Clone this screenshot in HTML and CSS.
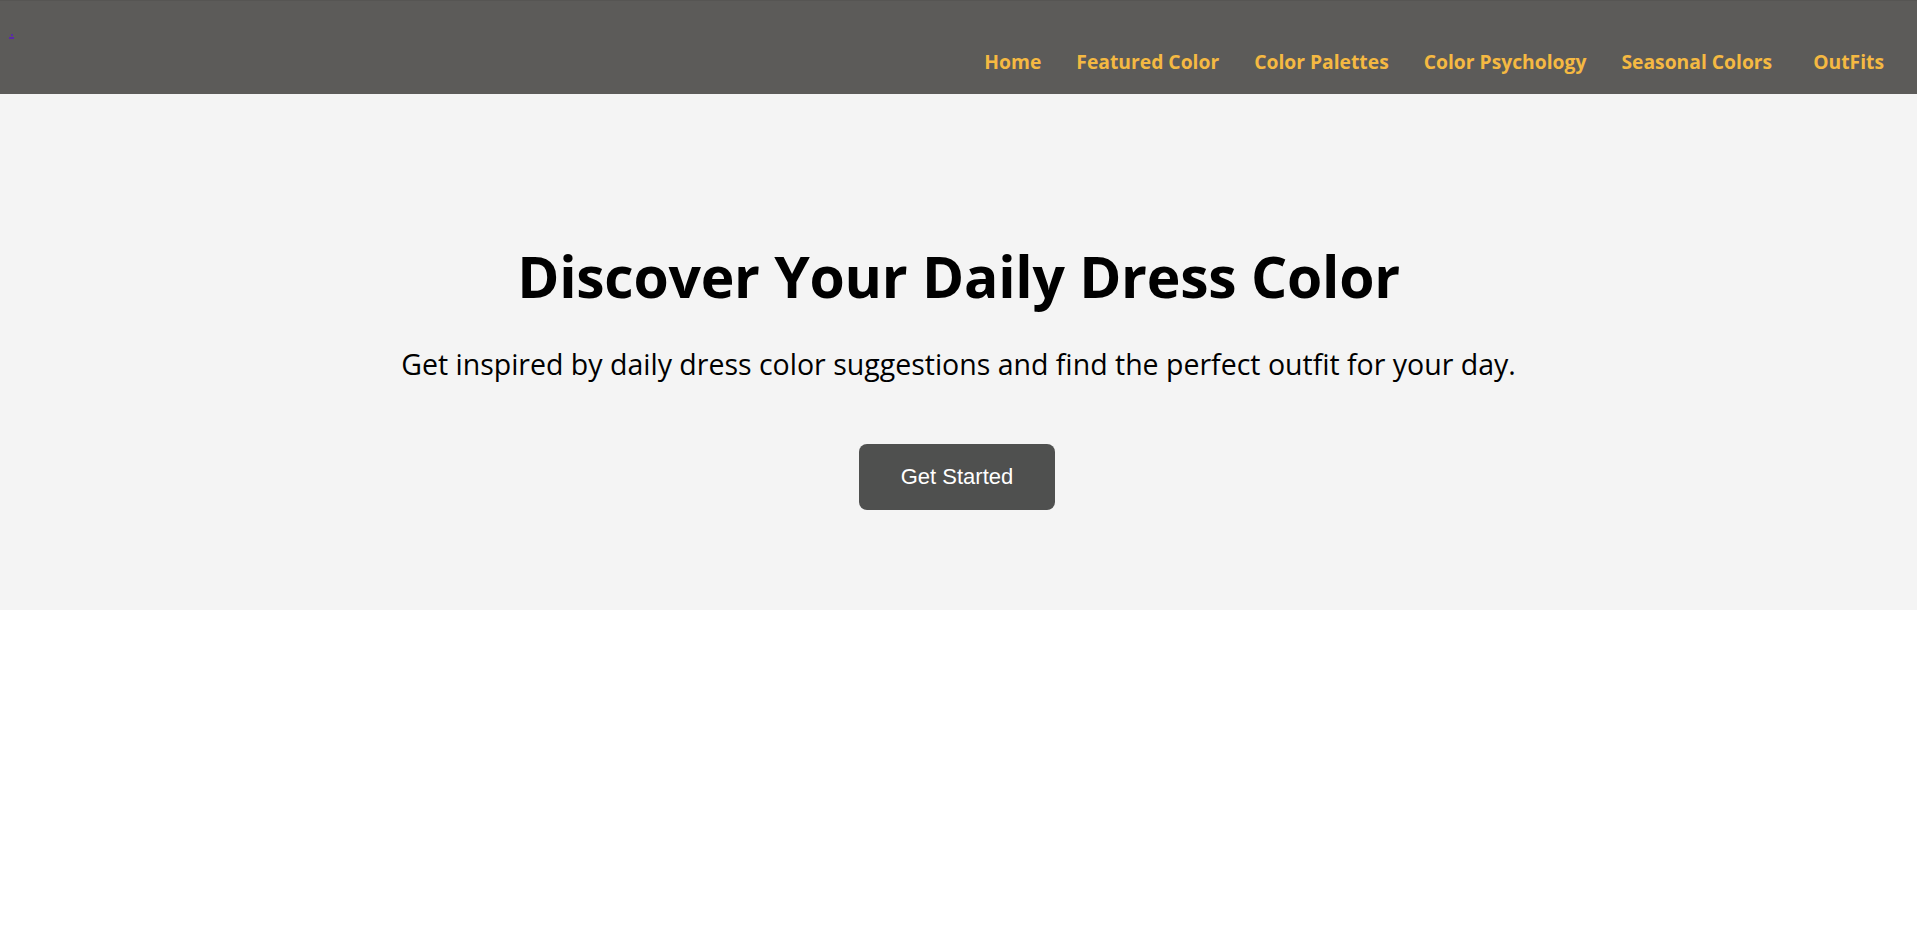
FILE: index.html
```html
<!DOCTYPE html>
<html lang="en">
<head>
<meta charset="utf-8">
<title>Daily Dress Color</title>
<link rel="stylesheet" href="styles.css">
</head>
<body>
<header class="site-header">
  <a class="logo" href="#" aria-label="logo">
    <svg width="6" height="6" viewBox="0 0 6 6"><rect x="2" y="0" width="2" height="2" fill="#5b2aa8"/><rect x="0" y="3" width="5" height="2" fill="#5b2aa8"/></svg>
  </a>
  <nav class="main-nav">
    <a href="#">Home</a>
    <a href="#">Featured Color</a>
    <a href="#">Color Palettes</a>
    <a href="#">Color Psychology</a>
    <a href="#">Seasonal Colors</a>
    <a class="last" href="#">OutFits</a>
  </nav>
</header>
<section class="hero">
  <h1 class="hero-title">Discover Your Daily Dress Color</h1>
  <p class="hero-text">Get inspired by daily dress color suggestions and find the perfect outfit for your day.</p>
  <button class="hero-btn" type="button">Get Started</button>
</section>
</body>
</html>
```
FILE: styles.css
```css
* { box-sizing: border-box; }
html, body { margin: 0; padding: 0; }
body {
  font-family: "Open Sans", "Noto Sans", sans-serif;
  background: #ffffff;
  color: #000;
}
.site-header {
  height: 94px;
  background: #5c5b59;
  border-top: 1px solid #565553;
  display: flex;
  justify-content: space-between;
  align-items: flex-start;
  padding: 0 33px 0 9px;
}
.logo {
  display: block;
  margin-top: 33px;
  line-height: 0;
}
.main-nav {
  display: flex;
  gap: 35px;
  margin-top: 47px;
}
.main-nav a {
  color: #f5b942;
  text-decoration: none;
  font-weight: 700;
  font-size: 19.3px;
  line-height: 28px;
}
.main-nav a.last {
  margin-left: 6px;
}
.hero {
  background: #f4f4f4;
  height: 516px;
  padding-top: 148px;
  text-align: center;
  display: flex;
  flex-direction: column;
  align-items: center;
}
.hero-title {
  margin: 0;
  font-size: 57px;
  line-height: 68px;
  font-weight: 700;
  letter-spacing: -0.25px;
}
.hero-text {
  margin: 36px 0 0;
  font-size: 28.5px;
  line-height: 36px;
}
.hero-btn {
  margin: 62px 3px 0 0;
  width: 196px;
  height: 66px;
  border: none;
  border-radius: 8px;
  background: #4f504f;
  color: #fff;
  font-family: "Liberation Sans", Arial, sans-serif;
  font-size: 22px;
  cursor: pointer;
}
```
